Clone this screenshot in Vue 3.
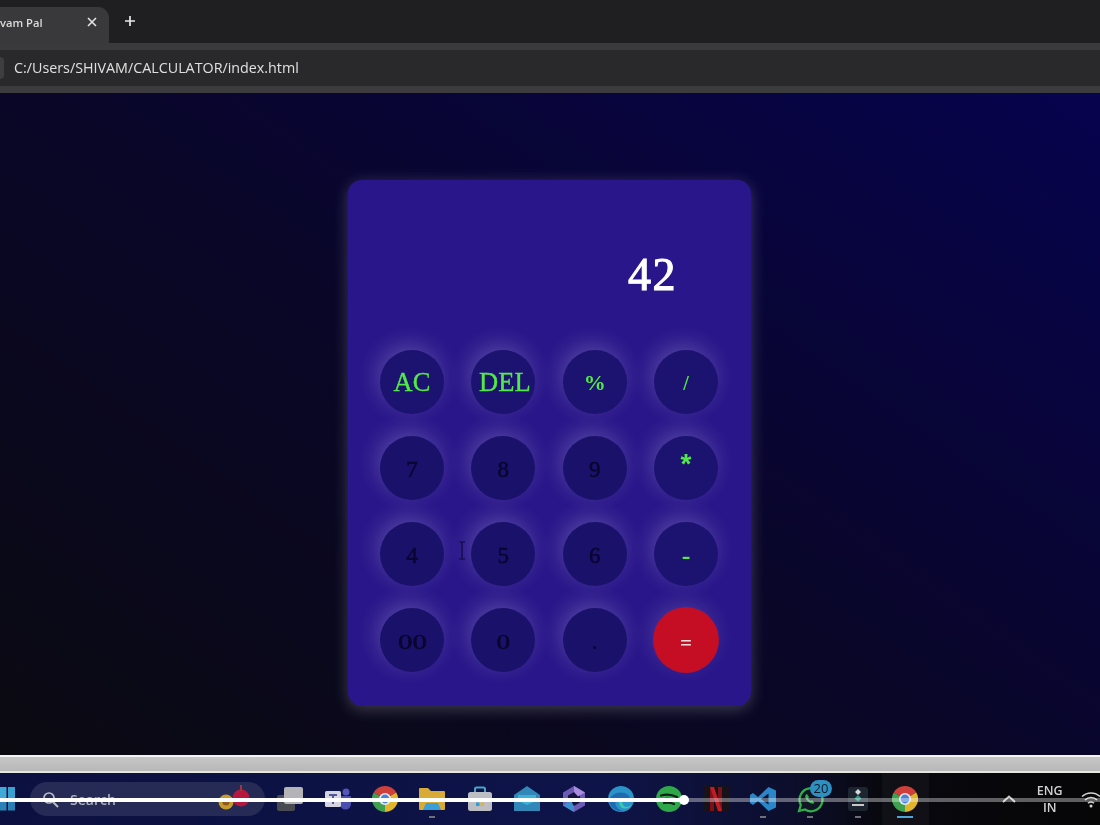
<script setup>
const keys = [
  { t: 'AC', c: 'op big' }, { t: 'DEL', c: 'op big del' }, { t: '%', c: 'op pct' }, { t: '/', c: 'op thin' },
  { t: '7', c: 'num' }, { t: '8', c: 'num' }, { t: '9', c: 'num' }, { t: '*', c: 'op star' },
  { t: '4', c: 'num' }, { t: '5', c: 'num' }, { t: '6', c: 'num' }, { t: '-', c: 'op minus' },
  { t: '00', c: 'num dbl' }, { t: '0', c: 'num zero' }, { t: '.', c: 'num' }, { t: '=', c: 'eq' },
]
</script>

<template>
  <div class="screen">
    <header class="tabstrip">
      <div class="tab">
        <span class="tab-title">vam Pal</span>
        <svg class="tab-x" width="10" height="10" viewBox="0 0 10 10"><path d="M1 1l8 8M9 1l-8 8" stroke="#e4e4e4" stroke-width="1.6"/></svg>
      </div>
      <svg class="plus" width="12" height="12" viewBox="0 0 12 12"><path d="M6 1v10M1 6h10" stroke="#e8e8e8" stroke-width="1.7"/></svg>
    </header>
    <div class="strip"></div>
    <div class="addressbar">
      <span class="site-dot"></span>
      <span class="url">C:/Users/SHIVAM/CALCULATOR/index.html</span>
    </div>
    <div class="strip low"></div>

    <main class="page">
      <section class="calc">
        <div class="display"><span>42</span></div>
        <div class="keys">
          <button v-for="k in keys" :key="k.t" class="key" :class="k.c"><span>{{ k.t }}</span></button>
        </div>
      </section>
      <svg class="ibeam" width="8" height="19" viewBox="0 0 8 19"><path d="M1 1h6M4 1v17M1 18h6" stroke="#0e0b3c" stroke-width="1.2" fill="none"/></svg>
    </main>

    <div class="greybar"></div>

    <footer class="taskbar">
      <svg class="win" width="15" height="24" viewBox="0 0 15 24">
        <rect x="0" y="0" width="6.5" height="11" fill="#3fa9d8"/><rect x="8" y="0" width="7" height="11" fill="#39a0d2"/>
        <rect x="0" y="12.5" width="6.5" height="11" fill="#2a82b8"/><rect x="8" y="12.5" width="7" height="11" fill="#2a7fb4"/>
      </svg>
      <div class="search">
        <svg width="17" height="17" viewBox="0 0 17 17"><circle cx="7" cy="7" r="5" fill="none" stroke="#b9bbc6" stroke-width="1.7"/><path d="M11 11l5 5" stroke="#b9bbc6" stroke-width="1.9"/></svg>
        <span class="search-text">Search</span>
        <svg class="fruit" width="32" height="28" viewBox="0 0 32 28">
          <circle cx="8" cy="19" r="7.5" fill="#c79a2c"/><circle cx="8" cy="19" r="3.5" fill="#8d5a1c"/>
          <circle cx="23" cy="15" r="8.5" fill="#b5173f"/><path d="M23 2v6" stroke="#a8323c" stroke-width="2"/>
        </svg>
      </div>
      <div class="tray-icons">
        <div class="slot">
          <svg width="28" height="26" viewBox="0 0 28 26"><rect x="1" y="9" width="18" height="16" rx="2" fill="#4a4a52"/><rect x="8" y="1" width="19" height="17" rx="2" fill="#b4b4b8"/></svg>
        </div>
        <div class="slot">
          <svg width="28" height="24" viewBox="0 0 28 24"><circle cx="22" cy="5" r="3.5" fill="#5457b8"/><path d="M16 9h11v8a5 5 0 0 1-11 0z" fill="#4b4fae"/><rect x="1" y="4" width="16" height="16" rx="1.5" fill="#d5d5e2"/><path d="M5 8h8M9 8v9" stroke="#54569c" stroke-width="2"/></svg>
        </div>
        <div class="slot">
          <svg width="26" height="26" viewBox="0 0 26 26"><path d="M13 13L1.74 6.5A13 13 0 0 1 24.26 6.5Z" fill="#d0403a"/><path d="M13 13L24.26 6.5A13 13 0 0 1 13 26Z" fill="#e0b52c"/><path d="M13 13L13 26A13 13 0 0 1 1.74 6.5Z" fill="#3fa14f"/><circle cx="13" cy="13" r="6" fill="#e8e8f0"/><circle cx="13" cy="13" r="4.4" fill="#4a82d8"/></svg>
        </div>
        <div class="slot run">
          <svg width="26" height="24" viewBox="0 0 26 24"><path d="M0 2a1 1 0 0 1 1-1h8l3 3h13a1 1 0 0 1 1 1v17a1 1 0 0 1-1 1H1a1 1 0 0 1-1-1z" fill="#d8aa36"/><path d="M7 16h12l3 7H4z" fill="#3a9ed8"/></svg>
        </div>
        <div class="slot">
          <svg width="26" height="26" viewBox="0 0 26 26"><path d="M8 6V3a1.500 1.500 0 0 1 1.500-1.500h7A1.500 1.500 0 0 1 18 3v3" fill="none" stroke="#4aa3c8" stroke-width="2"/><rect x="1" y="6" width="24" height="19" rx="2.500" fill="#bdbdc4"/><rect x="9" y="12" width="3.500" height="3.500" fill="#d95a2b"/><rect x="13.500" y="12" width="3.500" height="3.500" fill="#7cb342"/><rect x="9" y="16.500" width="3.500" height="3.500" fill="#2b9fd8"/><rect x="13.500" y="16.500" width="3.500" height="3.500" fill="#e6b32c"/></svg>
        </div>
        <div class="slot">
          <svg width="26" height="26" viewBox="0 0 26 26"><path d="M0 9L13 0l13 9v16H0z" fill="#3187b8"/><path d="M4 9h18v6l-9 4-9-4z" fill="#3fb1d8"/></svg>
        </div>
        <div class="slot">
          <svg width="24" height="26" viewBox="0 0 24 26"><path d="M12 0l11 6.500v13L12 26 1 19.500v-13z" fill="#6b5bb5"/><path d="M12 6l6 3.500v7L12 20l-6-3.500v-7z" fill="#17133f"/><path d="M1 19.500l8-5 3 6-0 5.500z" fill="#3d8fd0"/><path d="M23 6.500l-7 4-4-4.500V0z" fill="#a98be0"/></svg>
        </div>
        <div class="slot">
          <svg width="26" height="26" viewBox="0 0 26 26"><circle cx="13" cy="13" r="13" fill="#2a93c8"/><path d="M1 15C3 7 13 4 20 9c3 2.500 3 7-1 7-3 0-1-3-5-4-5-1-8 4-6 8 1.500 3 5 5 9 5A13 13 0 0 1 1 15z" fill="#1f6bb0"/><path d="M13 13c-2 1-3 5 0 8 3 2.500 8 2 11-2-3 2-7 3-9 0-1-2 0-4-2-6z" fill="#3cc8b0"/></svg>
        </div>
        <div class="slot">
          <svg width="26" height="26" viewBox="0 0 26 26"><circle cx="13" cy="13" r="13" fill="#2fa84a"/><path d="M5 9.500c5-1.500 11-1 16 1.500M6.500 13.500c4-1 9-.7 13 1.300M8 17c3-.7 7-.5 10 1" fill="none" stroke="#10201a" stroke-width="2.300" stroke-linecap="round"/></svg>
        </div>
        <div class="slot">
          <svg width="26" height="26" viewBox="0 0 26 26"><rect width="26" height="26" fill="#17121a"/><path d="M7 1h4v24l-4 0z" fill="#7d0f18"/><path d="M15 1h4v24h-4z" fill="#7d0f18"/><path d="M7 1h4l8 24h-4z" fill="#c01c24"/></svg>
        </div>
        <div class="slot run">
          <svg width="26" height="26" viewBox="0 0 26 26"><path d="M18.500 1L26 4.500v17L18.500 25 8 15l-5 4-3-2v-8l3-2 5 4z" fill="#2a86c8"/><path d="M18.500 7.500L11 13l7.500 5.500z" fill="#0f1430"/></svg>
        </div>
        <div class="slot run">
          <svg width="27" height="27" viewBox="0 0 27 27"><path d="M2 25l1.800-6A11.500 11.500 0 1 1 8 23.500z" fill="#101624" stroke="#30b04a" stroke-width="2.200"/><path d="M9 8.500c-1.500 1.500-1 4 1.500 6.500s5 3.500 7 2l-2.500-3-1.500 1-2.500-2.500 1-1.500-2-3z" fill="#30b04a"/></svg>
          <span class="badge">20</span>
        </div>
        <div class="slot run">
          <svg width="22" height="26" viewBox="0 0 22 26"><rect x="1" y="1" width="20" height="24" rx="3" fill="#1c2530"/><path d="M11 3l3 3-3 3-3-3z" fill="#d8d8d8"/><path d="M11 9l3.500 3.500-3.500 3-3.500-3z" fill="#2d9a86"/><path d="M5 19h12" stroke="#c8c8c8" stroke-width="2"/></svg>
        </div>
        <div class="slot run active">
          <svg width="26" height="26" viewBox="0 0 26 26"><path d="M13 13L1.74 6.5A13 13 0 0 1 24.26 6.5Z" fill="#d0403a"/><path d="M13 13L24.26 6.5A13 13 0 0 1 13 26Z" fill="#e0b52c"/><path d="M13 13L13 26A13 13 0 0 1 1.74 6.5Z" fill="#3fa14f"/><circle cx="13" cy="13" r="6" fill="#e8e8f0"/><circle cx="13" cy="13" r="4.4" fill="#4a82d8"/></svg>
        </div>
      </div>
      <div class="tray">
        <svg width="14" height="8" viewBox="0 0 14 8"><path d="M1 7l6-5.500L13 7" fill="none" stroke="#c8c8c8" stroke-width="1.900"/></svg>
        <div class="lang"><span>ENG</span><span>IN</span></div>
        <svg class="wifi" width="20" height="18" viewBox="0 0 20 18"><path d="M1 6.500a13 13 0 0 1 18 0M4 10a8.500 8.500 0 0 1 12 0M7 13.300a4 4 0 0 1 6 0" fill="none" stroke="#d4d4d4" stroke-width="1.500"/><circle cx="10" cy="16" r="1.500" fill="#d4d4d4"/></svg>
      </div>
      <div class="seek"><i class="played"></i><i class="knob"></i></div>
    </footer>
  </div>
</template>

<style scoped>
.screen {
  width: 1100px;
  height: 825px;
  display: flex;
  flex-direction: column;
  overflow: hidden;
  background: #000;
  font-family: "Open Sans", "Noto Sans", sans-serif;
  filter: blur(0.5px);
}
.tabstrip {
  height: 43px;
  flex: none;
  box-sizing: border-box;
  padding-top: 7px;
  display: flex;
  align-items: flex-start;
  background: #1f1f21;
}
.tab {
  width: 109px;
  height: 36px;
  box-sizing: border-box;
  padding: 0 12px 6px 0;
  display: flex;
  align-items: center;
  justify-content: space-between;
  border-radius: 0 11px 0 0;
  background: #39393b;
}
.tab-title {
  color: #dcdcdc;
  font-size: 11.2px;
  font-weight: 600;
  white-space: nowrap;
}
.plus { margin: 8px 0 0 15px; }
.strip { height: 7px; flex: none; background: #3a3a3c; }
.strip.low { background: #3c3c3e; }
.addressbar {
  height: 36px;
  flex: none;
  display: flex;
  align-items: center;
  gap: 10px;
  background: #29292b;
}
.site-dot {
  width: 4px;
  height: 22px;
  border-radius: 0 11px 11px 0;
  background: #3e3e40;
}
.url {
  color: #e0e0e0;
  font-size: 14.3px;
  margin-top: -1px;
}
.page {
  position: relative;
  height: 662px;
  flex: none;
  box-sizing: border-box;
  padding: 87px 1px 0 0;
  display: flex;
  justify-content: center;
  align-items: flex-start;
  background: linear-gradient(35deg, #0b0a11 0%, #090628 48%, #07034e 100%);
}
.calc {
  width: 403px;
  height: 526px;
  box-sizing: border-box;
  padding: 0 33px 0 32px;
  border-radius: 14px;
  background: #29168a;
  box-shadow: 0 3px 16px rgba(255, 255, 255, 0.22);
}
.display {
  height: 170px;
  box-sizing: border-box;
  padding: 69px 41px 0 0;
  display: flex;
  justify-content: flex-end;
  color: #fff;
  font-family: "Liberation Serif", serif;
  font-size: 46px;
  line-height: 52px;
  letter-spacing: 1.5px;
  -webkit-text-stroke: 1.1px #fff;
}
.keys {
  display: grid;
  grid-template-columns: repeat(4, 64px);
  justify-content: space-between;
  row-gap: 22px;
}
.key {
  width: 64px;
  height: 64px;
  padding: 0;
  border: 0;
  border-radius: 50%;
  display: flex;
  align-items: center;
  justify-content: center;
  background: #1c1270;
  box-shadow: -3px -6px 22px rgba(255, 255, 255, 0.2);
  font-family: "Liberation Serif", serif;
  font-size: 23px;
}
.key span { display: block; white-space: nowrap; }
.num {
  padding-top: 4px;
  color: #090630;
  background: #1a116a;
  -webkit-text-stroke: 0.5px #090630;
}
.op { color: #52ea48; }
.big { font-size: 26.5px; -webkit-text-stroke: 0.35px #52ea48; }
.del { padding-left: 3px; }
.pct { font-size: 22px; font-weight: 700; padding-top: 2px; }
.thin { font-size: 20px; font-weight: 700; padding-top: 3px; }
.star { font-family: "Liberation Sans", sans-serif; font-size: 28px; font-weight: 700; padding-bottom: 9px; }
.minus { font-size: 26px; font-weight: 700; padding-top: 4px; }
.dbl span { font-size: 21px; transform: scaleX(1.38); padding-top: 0; }
.zero span { font-size: 21px; transform: scaleX(1.3); padding-top: 0; }
.eq {
  color: #f2dcdc;
  background: #c50e24;
  font-size: 21px;
  font-weight: 700;
  padding-top: 7px;
  box-shadow: 0 0 0 1px #b8122f, -3px -6px 22px rgba(255, 255, 255, 0.14);
}
.ibeam { position: absolute; left: 458px; top: 448px; }
.greybar {
  height: 18px;
  flex: none;
  box-sizing: border-box;
  border-top: 2px solid #f4f4f4;
  border-bottom: 2px solid #e6e6e0;
  background: linear-gradient(#c6c6c6, #b8b8b8);
}
.taskbar {
  position: relative;
  flex: 1;
  display: flex;
  align-items: center;
  background: linear-gradient(90deg, #0b1040 0%, #0e1448 55%, #0c0e2c 72%, #08080f 80%, #060607 100%);
}
.win { flex: none; }
.search {
  width: 235px;
  height: 34px;
  flex: none;
  margin-left: 15px;
  box-sizing: border-box;
  padding-left: 12px;
  display: flex;
  align-items: center;
  gap: 11px;
  border-radius: 17px;
  background: #262b55;
}
.search-text { color: #aeb0bc; font-size: 14px; font-weight: 600; }
.fruit { margin: -4px 0 0 91px; }
.tray-icons { display: flex; margin-left: 1.7px; }
.slot {
  position: relative;
  width: 47.3px;
  height: 52px;
  flex: none;
  display: flex;
  align-items: center;
  justify-content: center;
}
.slot.run::after {
  content: "";
  position: absolute;
  left: 20.500px;
  top: 43px;
  width: 6px;
  height: 2px;
  background: #6f6f78;
}
.slot.active { background: rgba(255, 255, 255, 0.035); }
.slot.active::after { left: 15px; width: 16px; background: #4aa6d8; }
.badge {
  position: absolute;
  left: 23px;
  top: 7px;
  width: 22px;
  height: 17px;
  border-radius: 9px;
  background: #2f8fc0;
  color: #0e1c2a;
  font-size: 13px;
  line-height: 17px;
  text-align: center;
}
.tray {
  flex: none;
  margin-left: 73px;
  display: flex;
  align-items: center;
  gap: 21px;
  color: #d0d0d0;
}
.lang {
  display: flex;
  flex-direction: column;
  align-items: center;
  font-size: 12.5px;
  font-weight: 600;
  line-height: 17px;
}
.wifi { flex: none; margin-left: -3px; }
.seek {
  position: absolute;
  left: 0;
  right: 0;
  top: 25px;
  height: 4px;
  background: rgba(255, 255, 255, 0.36);
}
.played {
  position: absolute;
  left: 0;
  top: 0;
  width: 684px;
  height: 4px;
  background: #fff;
}
.knob {
  position: absolute;
  left: 679px;
  top: -3px;
  width: 10px;
  height: 10px;
  border-radius: 50%;
  background: #fff;
}
</style>
